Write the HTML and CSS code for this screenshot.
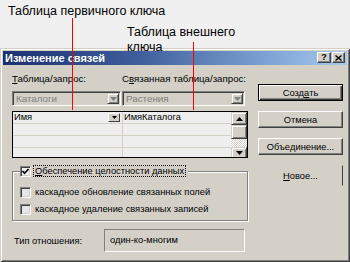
FILE: index.html
```html
<!DOCTYPE html>
<html lang="ru">
<head>
<meta charset="utf-8">
<title>Изменение связей</title>
<link rel="stylesheet" href="styles.css">
</head>
<body>
<div class="callout callout-primary">Таблица первичного ключа</div>
<div class="callout callout-foreign">Таблица внешнего ключа</div>
<div class="pointer pointer-primary"></div>
<div class="pointer pointer-foreign"></div>

<div class="dialog">
  <div class="titlebar">
    <span class="title">Изменение связей</span>
    <span class="caption-btns">
      <span class="cbtn cbtn-help">?</span>
      <span class="cbtn cbtn-close"><svg width="7" height="6" viewBox="0 0 7 6"><path d="M0.5 0.5 L6.5 5.5 M6.5 0.5 L0.5 5.5" stroke="#000" stroke-width="1.4"/></svg></span>
    </span>
  </div>
  <div class="body">
    <div class="main">
      <div class="labels">
        <span class="lab lab1"><u>Т</u>аблица/запрос:</span>
        <span class="lab lab2">С<u>в</u>язанная таблица/запрос:</span>
      </div>
      <div class="combos">
        <div class="combo c1"><span class="combo-text">Каталоги</span><span class="combo-btn"><svg width="7" height="4" viewBox="0 0 7 4"><polygon points="0,0 7,0 3.5,4" fill="#808080"/></svg></span></div>
        <div class="combo c2"><span class="combo-text">Растения</span><span class="combo-btn"><svg width="7" height="4" viewBox="0 0 7 4"><polygon points="0,0 7,0 3.5,4" fill="#808080"/></svg></span></div>
      </div>
      <div class="grid">
        <div class="cells">
          <div class="row">
            <div class="cell cell1 head"><span>Имя</span><span class="cell-btn"><svg width="5" height="3" viewBox="0 0 5 3"><polygon points="0,0 5,0 2.5,3" fill="#000"/></svg></span></div>
            <div class="cell cell2">ИмяКаталога</div>
          </div>
          <div class="row"><div class="cell cell1"></div><div class="cell cell2"></div></div>
          <div class="row"><div class="cell cell1"></div><div class="cell cell2"></div></div>
          <div class="row"><div class="cell cell1"></div><div class="cell cell2"></div></div>
        </div>
        <div class="vscroll">
          <div class="sbtn sbtn-up"><svg width="7" height="4" viewBox="0 0 7 4"><polygon points="0,4 7,4 3.5,0" fill="#000"/></svg></div>
          <div class="sthumb"></div>
          <div class="strack"></div>
          <div class="sbtn sbtn-down"><svg width="7" height="4" viewBox="0 0 7 4"><polygon points="0,0 7,0 3.5,4" fill="#000"/></svg></div>
        </div>
      </div>
      <fieldset class="group">
        <legend class="group-legend">
          <span class="cbox cbox-on"><svg width="7" height="7" viewBox="0 0 7 7"><polyline points="0.5,3 2.6,5.2 6.6,1" fill="none" stroke="#000" stroke-width="1.7"/></svg></span>
          <span class="focus-label"><u>О</u>беспечение целостности данных</span>
        </legend>
        <div class="cbrow"><span class="cbox cbox-dim"></span><span class="cb-label">каскадное обновление связанных полей</span></div>
        <div class="cbrow"><span class="cbox cbox-dim"></span><span class="cb-label">каскадное удаление связанных записей</span></div>
      </fieldset>
      <div class="reltype">
        <span class="rel-label">Тип отношения:</span>
        <span class="rel-box">один-ко-многим</span>
      </div>
    </div>
    <div class="buttons">
      <div class="btn btn-default">Созд<u>а</u>ть</div>
      <div class="btn">Отмена</div>
      <div class="btn">Объе<u>д</u>инение...</div>
      <div class="btn btn-flat"><u>Н</u>овое...</div>
    </div>
  </div>
</div>
</body>
</html>
```

FILE: styles.css
```css
* { box-sizing: border-box; }
html, body { margin: 0; padding: 0; }
body {
  width: 350px;
  height: 262px;
  overflow: hidden;
  position: relative;
  background: #f0f0f0;
  font-family: "Liberation Sans", Arial, sans-serif;
}

/* annotations over the screenshot */
.callout {
  position: absolute;
  z-index: 3;
  font-size: 12.5px;
  line-height: 15px;
  color: #000;
}
.callout-primary { left: 8px; top: 4px; white-space: nowrap; }
.callout-foreign { left: 127px; top: 25px; width: 112px; }
.pointer {
  position: absolute;
  z-index: 3;
  width: 1px;
  background: #f00;
}
.pointer-primary { left: 72px; top: 18px; height: 92px; }
.pointer-foreign { left: 193px; top: 42px; height: 68px; }

/* window */
.dialog {
  position: absolute;
  left: 0;
  top: 48px;
  width: 350px;
  height: 214px;
  padding: 3px;
  background: #d4d0c8;
  box-shadow: inset 1px 1px #d4d0c8, inset -1px -1px #404040, inset 2px 2px #fff, inset -2px -2px #808080;
  font-size: 9.3px;
  color: #000;
}
.titlebar {
  height: 14px;
  display: flex;
  align-items: center;
  justify-content: space-between;
  padding: 0 2px 0 2px;
  background: linear-gradient(to right, #1a3170 0%, #3f5f9c 40%, #7b9fd0 75%, #a6caf0 100%);
}
.title {
  color: #fff;
  font-weight: bold;
  font-size: 11px;
  line-height: 13px;
}
.caption-btns { display: flex; gap: 1px; margin-top: -1px; }
.cbtn {
  width: 14px;
  height: 11px;
  display: flex;
  align-items: center;
  justify-content: center;
  background: #d4d0c8;
  border: 1px solid;
  border-color: #fff #404040 #404040 #fff;
  box-shadow: inset -1px -1px #808080;
  font-weight: bold;
  font-size: 9px;
  line-height: 9px;
}
.cbtn-close { width: 13px; }

.body {
  display: flex;
  padding: 8px 0 0 9px;
}
.main {
  width: 236px;
  display: flex;
  flex-direction: column;
}
.labels {
  display: flex;
  height: 11px;
  line-height: 11px;
  font-size: 9.7px;
  white-space: nowrap;
}
.lab1 { width: 110px; flex: none; }

.combos {
  display: flex;
  gap: 1px;
  margin-top: 7px;
}
.combo {
  height: 15px;
  display: flex;
  align-items: center;
  justify-content: space-between;
  padding: 0 1px 0 3px;
  background: #d4d0c8;
  border: 1px solid;
  border-color: #808080 #fff #fff #808080;
  box-shadow: inset 1px 1px #404040, inset -1px -1px #d4d0c8;
  color: #808080;
  font-size: 9.8px;
}
.c1 { width: 109px; }
.c2 { width: 123px; }
.combo-btn {
  width: 12px;
  height: 11px;
  display: flex;
  align-items: center;
  justify-content: center;
  border: 1px solid;
  border-color: #d4d0c8 #404040 #404040 #d4d0c8;
  box-shadow: inset 1px 1px #fff, inset -1px -1px #808080;
}

.grid {
  margin-top: 5px;
  height: 47px;
  display: flex;
  border: 1px solid #000;
  overflow: hidden;
  background: #eeeeee;
}
.cells { width: 218px; }
.row {
  display: flex;
  height: 12px;
  border-bottom: 1px solid #d4d0c8;
}
.cell {
  height: 11px;
  line-height: 11px;
  padding-left: 1px;
}
.cell1 {
  width: 110px;
  border-right: 1px solid #d4d0c8;
}
.cell2 { width: 108px; }
.head {
  display: flex;
  justify-content: space-between;
  align-items: center;
  padding-right: 2px;
}
.cell-btn {
  width: 12px;
  height: 9px;
  display: flex;
  align-items: center;
  justify-content: center;
  background: #d4d0c8;
  border: 1px solid;
  border-color: #fff #404040 #404040 #fff;
}

.vscroll {
  width: 16px;
  display: flex;
  flex-direction: column;
}
.sbtn, .sthumb {
  flex: none;
  display: flex;
  align-items: center;
  justify-content: center;
  background: #d4d0c8;
  border: 1px solid;
  border-color: #d4d0c8 #404040 #404040 #d4d0c8;
  box-shadow: inset 1px 1px #fff, inset -1px -1px #808080;
}
.sbtn-up { height: 13px; }
.sthumb { height: 14px; }
.strack {
  flex: none;
  height: 8px;
  background-color: #d4d0c8;
  background-image: repeating-conic-gradient(#fff 0 25%, #d4d0c8 0 50%);
  background-size: 2px 2px;
}
.sbtn-down { height: 12px; }

.group {
  margin: 7px 0 0 0;
  padding: 0 0 5px 7px;
  min-width: 0;
  border: 1px solid #808080;
  box-shadow: 1px 1px 0 #fff, inset 1px 1px 0 #fff;
}
.group-legend {
  display: flex;
  align-items: center;
  height: 12px;
  padding: 0 2px 0 0;
  background: #d4d0c8;
}
.cbox {
  flex: none;
  width: 11px;
  height: 11px;
  display: flex;
  align-items: center;
  justify-content: center;
  border: 1px solid;
  border-color: #808080 #fff #fff #808080;
  box-shadow: inset 1px 1px #404040, inset -1px -1px #d4d0c8;
  background: #f4f4f4;
}
.cbox-dim { background: #e6e6e6; }
.focus-label {
  margin-left: 2px;
  height: 12px;
  line-height: 10px;
  padding: 0 1px;
  border: 1px dotted #000;
}
.cbrow {
  display: flex;
  align-items: center;
  height: 11px;
  margin-top: 6px;
}
.cbrow:first-of-type { margin-top: 10px; }
.cb-label { margin-left: 4px; line-height: 11px; }

.reltype {
  display: flex;
  align-items: center;
  margin-top: 8px;
}
.rel-label {
  width: 92px;
  padding-left: 2px;
}
.rel-box {
  width: 141px;
  height: 23px;
  line-height: 21px;
  padding-left: 5px;
  border: 1px solid;
  border-color: #808080 #fff #fff #808080;
}

.buttons {
  width: 85px;
  margin-left: 10px;
  padding-top: 11px;
  display: flex;
  flex-direction: column;
  gap: 10px;
}
.btn {
  height: 17px;
  display: flex;
  align-items: center;
  justify-content: center;
  background: #d4d0c8;
  border: 1px solid;
  border-color: #fff #404040 #404040 #fff;
  box-shadow: inset -1px -1px #808080;
}
.btn-default {
  border-color: #000;
  box-shadow: inset 1px 1px #fff, inset -1px -1px #404040, inset -2px -2px #808080;
}
.btn-flat {
  height: 21px;
  border-color: transparent #404040 transparent transparent;
  box-shadow: none;
}
```
